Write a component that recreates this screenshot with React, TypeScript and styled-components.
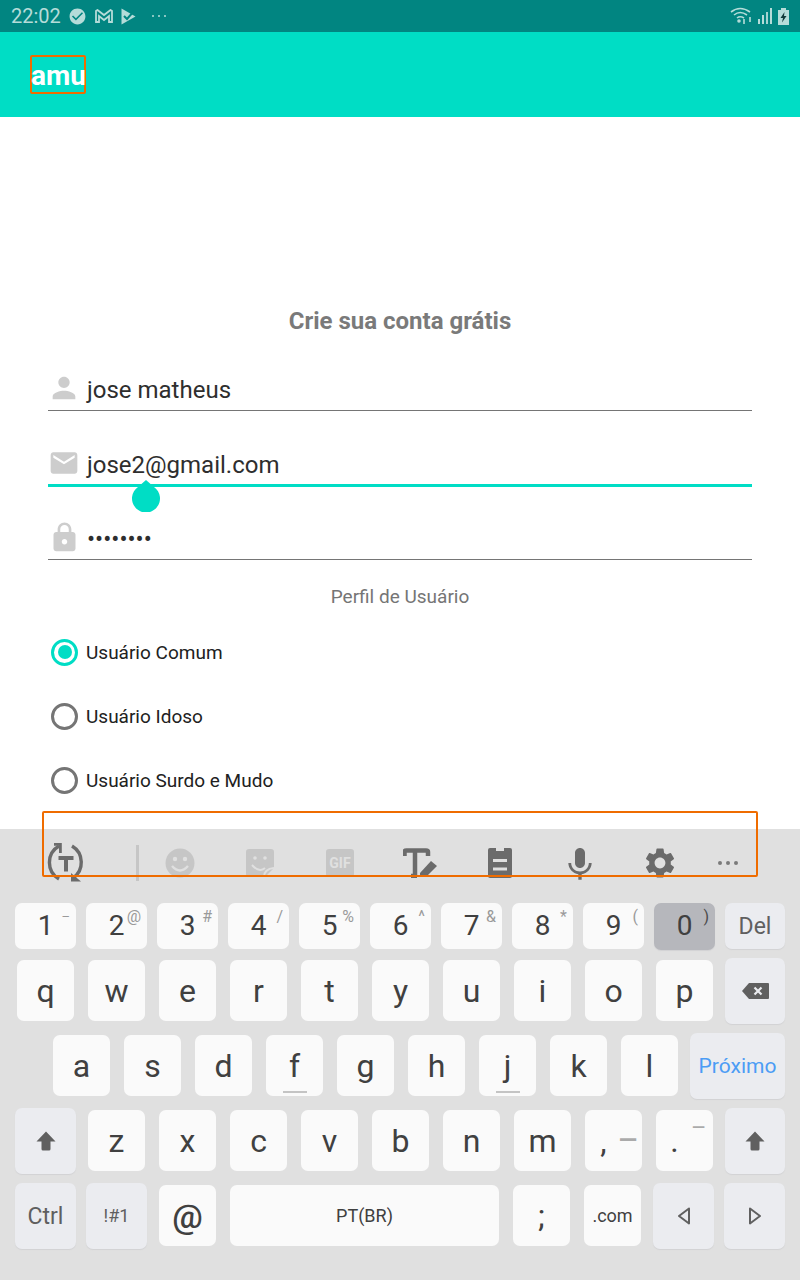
import React from "react";
import styled, { createGlobalStyle } from "styled-components";
import { MdCheckCircle, MdEmail, MdKeyboardVoice, MdLock, MdPerson, MdSettings } from "react-icons/md";

const GlobalStyle = createGlobalStyle`
  html, body {
    margin: 0;
    padding: 0;
    background: #fff;
    font-family: Roboto, "Liberation Sans", sans-serif;
  }
`;

const Screen = styled.div`
  position: relative;
  display: flex;
  flex-direction: column;
  width: 800px;
  height: 1280px;
  overflow: hidden;
`;

const StatusBar = styled.div`
  display: flex;
  align-items: center;
  height: 32px;
  padding: 0 11px;
  box-sizing: border-box;
  background: #018581;
  color: #b5dcd9;
`;

const Time = styled.span`
  font-size: 20px;
  margin-right: 7px;
`;

const StatusIcons = styled.div`
  display: flex;
  align-items: center;
  gap: 8px;
  color: #b5dcd9;
`;

const StatusMore = styled(StatusIcons)`
  margin-left: 15px;
`;

const StatusRight = styled(StatusIcons)`
  margin-left: auto;
  gap: 6px;
`;

const AppBar = styled.header`
  display: flex;
  align-items: center;
  height: 85px;
  padding-left: 30px;
  background: #00ddc5;
`;

const AppTitle = styled.div`
  box-sizing: border-box;
  width: 56px;
  height: 39px;
  border: 2px solid #ef6c00;
  border-radius: 2px;
  color: #fff;
  font-size: 28px;
  font-weight: 700;
  line-height: 38px;
  text-indent: -1px;
  white-space: nowrap;
`;

const Form = styled.main`
  position: relative;
  flex: 1;
  padding: 0 48px;
  background: #fff;
`;

const Heading = styled.h1`
  margin: 190px 0 0;
  color: #7a7a7a;
  font-size: 24px;
  font-weight: 700;
  line-height: 28px;
  text-align: center;
`;

const Field = styled.div<{ $focused?: boolean; $gap: number }>`
  display: flex;
  align-items: center;
  box-sizing: border-box;
  height: 46px;
  margin-top: ${({ $gap }) => $gap}px;
  padding: 4px 0 0 3px;
  border-bottom: ${({ $focused }) => ($focused ? "3px solid #00ddc5" : "1px solid #757575")};
`;

const FieldIcon = styled.span`
  display: flex;
  justify-content: center;
  width: 26px;
  margin: 0 10px 3px 0;
  color: #cdcdcd;

  svg {
    flex: none;
  }
`;

const FieldValue = styled.span`
  color: #2e2e2e;
  font-size: 24px;
  line-height: 30px;
  white-space: nowrap;
`;

const Handle = styled.svg`
  position: absolute;
  left: 132px;
  top: 363px;
`;

const Section = styled.div`
  margin-top: 25px;
  color: #757575;
  font-size: 19px;
  line-height: 24px;
  text-align: center;
`;

const RadioList = styled.div`
  margin-top: 11px;
`;

const RadioRow = styled.div`
  display: flex;
  align-items: center;
  height: 64px;
  padding-left: 3px;
  color: #212121;
  font-size: 19px;
`;

const RadioCircle = styled.span<{ $on?: boolean }>`
  display: flex;
  align-items: center;
  justify-content: center;
  box-sizing: border-box;
  width: 27px;
  height: 27px;
  margin-right: 8px;
  border: 3px solid ${({ $on }) => ($on ? "#00ddc5" : "#757575")};
  border-radius: 50%;

  &::after {
    content: "";
    display: ${({ $on }) => ($on ? "block" : "none")};
    width: 14px;
    height: 14px;
    border-radius: 50%;
    background: #00ddc5;
  }
`;

const Keyboard = styled.section`
  height: 451px;
  background: #e0e0e0;
`;

const Toolbar = styled.div`
  display: flex;
  align-items: flex-start;
  box-sizing: border-box;
  height: 74px;
  padding-left: 26px;
`;

const ToolSlot = styled.div<{ $w?: number; $off?: boolean }>`
  display: flex;
  align-items: center;
  justify-content: center;
  flex: none;
  width: ${({ $w }) => $w ?? 80}px;
  height: 68px;
  color: ${({ $off }) => ($off ? "#c6c6c6" : "#6b6b6b")};
`;

const ToolDivider = styled.div`
  flex: none;
  width: 3px;
  height: 36px;
  margin: 16px 1px 0 30px;
  background: #c6c6c6;
`;

const GifBadge = styled.span`
  display: flex;
  align-items: center;
  justify-content: center;
  width: 28px;
  height: 28px;
  border-radius: 3px;
  background: #c6c6c6;
  color: #e0e0e0;
  font-size: 14px;
  font-weight: 700;
`;

const KeyRows = styled.div`
  display: flex;
  flex-direction: column;
  gap: 9px;
`;

const Row = styled.div<{ $pad?: number; $h?: number }>`
  display: flex;
  height: ${({ $h }) => $h ?? 66}px;
  padding-left: ${({ $pad }) => $pad ?? 10}px;
`;

const Cell = styled.div<{ $w?: number }>`
  display: flex;
  align-items: center;
  justify-content: center;
  flex: none;
  width: ${({ $w }) => $w ?? 71}px;
`;

const Key = styled.div<{
  $w?: number;
  $h?: number;
  $tone?: "plain" | "fn" | "down";
  $size?: number;
  $weight?: number;
  $shift?: number;
  $color?: string;
  $bump?: boolean;
}>`
  position: relative;
  display: flex;
  align-items: center;
  justify-content: center;
  box-sizing: border-box;
  flex: none;
  width: ${({ $w }) => $w ?? 57}px;
  height: ${({ $h }) => $h ?? 61}px;
  margin-bottom: ${({ $h }) => ($h ? 0 : 1)}px;
  padding-right: ${({ $shift }) => $shift ?? 0}px;
  border-radius: 7px;
  background: ${({ $tone }) => ($tone === "fn" ? "#ebecf0" : $tone === "down" ? "#b6b7bc" : "#fafafa")};
  box-shadow: ${({ $tone }) => ($tone === "plain" || !$tone ? "none" : "0 1px 1px #d2d2d4")};
  color: ${({ $color }) => $color ?? "#404040"};
  font-size: ${({ $size }) => $size ?? 32}px;
  font-weight: ${({ $weight }) => $weight ?? 400};
  line-height: 1;

  &::after {
    content: "";
    display: ${({ $bump }) => ($bump ? "block" : "none")};
    position: absolute;
    left: 17px;
    bottom: 3px;
    width: 24px;
    height: 2px;
    background: #c4c4c4;
  }
`;

const Hint = styled.span<{ $top?: number; $right?: number; $size?: number; $color?: string; $weight?: number }>`
  position: absolute;
  top: ${({ $top }) => $top ?? 5}px;
  right: ${({ $right }) => $right ?? 6}px;
  color: ${({ $color }) => $color ?? "#9a9a9a"};
  font-size: ${({ $size }) => $size ?? 16}px;
  font-weight: ${({ $weight }) => $weight ?? 400};
  line-height: 18px;
`;

const Marker = styled.div`
  position: absolute;
  left: 42px;
  top: 811px;
  box-sizing: border-box;
  width: 716px;
  height: 66px;
  border: 2px solid #ef6c00;
  border-radius: 2px;
`;

const numberKeys = [
  ["1", "–"],
  ["2", "@"],
  ["3", "#"],
  ["4", "/"],
  ["5", "%"],
  ["6", "^"],
  ["7", "&"],
  ["8", "*"],
  ["9", "("],
];

const ShiftIcon = () => (
  <svg width="20" height="20" viewBox="0 0 20 20" fill="#606060">
    <path d="M10 0.5 L19.5 10.5 L14.5 10.5 L14.5 18 Q14.5 19.5 13 19.5 L7 19.5 Q5.5 19.5 5.5 18 L5.5 10.5 L0.5 10.5 Z" />
  </svg>
);

const BackspaceIcon = () => (
  <svg width="27" height="16" viewBox="0 0 27 16">
    <path d="M7 0 H26 Q27 0 27 1 V15 Q27 16 26 16 H7 L0 8 Z" fill="#606060" />
    <path d="M12.5 4.5 L19.5 11.5 M19.5 4.5 L12.5 11.5" stroke="#ebecf0" strokeWidth="2.2" />
  </svg>
);

const ArrowIcon = ({ flip }: { flip?: boolean }) => (
  <svg width="12" height="18" viewBox="0 0 12 18">
    <path
      d={flip ? "M1 1.5 L11 9 L1 16.5 Z" : "M11 1.5 L1 9 L11 16.5 Z"}
      fill="none"
      stroke="#606060"
      strokeWidth="2"
      strokeLinejoin="round"
    />
  </svg>
);

const RotateTextIcon = () => (
  <svg width="40" height="40" viewBox="0 0 40 40" fill="none" stroke="#6b6b6b" strokeWidth="3.4">
    <path d="M13 3 A19 19 0 0 0 13 36" />
    <path d="M26 3 A19 19 0 0 1 27 35" />
    <path d="M8 1.4 H14.4 V10" strokeWidth="2.8" />
    <path d="M25 30 V38.5 H35 Z" fill="#6b6b6b" stroke="none" />
    <path d="M12.5 13 H27.5 V17 H22 V28.5 H18 V17 H12.5 Z" fill="#6b6b6b" stroke="none" />
  </svg>
);

const SmileIcon = () => (
  <svg width="30" height="30" viewBox="0 0 30 30">
    <circle cx="15" cy="15" r="14.5" fill="#c6c6c6" />
    <circle cx="10" cy="11" r="2.2" fill="#e0e0e0" />
    <circle cx="20" cy="11" r="2.2" fill="#e0e0e0" />
    <path d="M7 18 Q15 27 23 18" fill="none" stroke="#e0e0e0" strokeWidth="2.4" />
  </svg>
);

const StickerIcon = () => (
  <svg width="28" height="28" viewBox="0 0 28 28">
    <path d="M3 0 H25 Q28 0 28 3 V19 L19 28 H3 Q0 28 0 25 V3 Q0 0 3 0 Z" fill="#c6c6c6" />
    <circle cx="9" cy="9" r="1.8" fill="#e0e0e0" />
    <circle cx="19" cy="9" r="1.8" fill="#e0e0e0" />
    <path d="M6 16 Q13 24 19 19" fill="none" stroke="#e0e0e0" strokeWidth="2" />
    <path d="M18 28 Q18 20 28 19" fill="none" stroke="#e0e0e0" strokeWidth="2" />
  </svg>
);

const TextEditIcon = () => (
  <svg width="34" height="30" viewBox="0 0 34 30">
    <path
      d="M1.5 8 V4 Q1.5 2.5 3.5 2.5 H23 Q25 2.5 25 4 V8 M12 2.5 V28 M8 28 H14"
      fill="none"
      stroke="#6b6b6b"
      strokeWidth="4.5"
    />
    <path d="M17 25 L28 13 L34 18 L23 29 L17 29 Z" fill="#6b6b6b" />
  </svg>
);

const ClipboardIcon = () => (
  <svg width="24" height="30" viewBox="0 0 24 30">
    <path d="M2 0 H8 V3 H16 V0 H22 Q24 0 24 2 V28 Q24 30 22 30 H2 Q0 30 0 28 V2 Q0 0 2 0 Z" fill="#6b6b6b" />
    <rect x="5" y="11" width="14" height="3" fill="#e0e0e0" />
    <rect x="5" y="19.5" width="14" height="3" fill="#e0e0e0" />
  </svg>
);

const MailMark = () => (
  <svg width="18" height="14" viewBox="0 0 18 14" fill="none" stroke="currentColor" strokeWidth="1.8">
    <path d="M1 13 V2 L2.5 1 L9 6 L15.5 1 L17 2 V13 H14 V7 L9 11 L4 7 V13 Z" />
  </svg>
);

const PlayCheck = () => (
  <svg width="15" height="17" viewBox="0 0 15 17">
    <path d="M0.5 0.5 L14.5 8.5 L0.5 16.5 Z" fill="currentColor" />
    <path d="M3 8 L6 11 L13 3" fill="none" stroke="#018581" strokeWidth="2" />
  </svg>
);

const MoreDots = () => (
  <svg width="16" height="4" viewBox="0 0 16 4" fill="currentColor">
    <circle cx="2" cy="2" r="1" />
    <circle cx="8" cy="2" r="1" />
    <circle cx="14" cy="2" r="1" />
  </svg>
);

const Wifi = () => (
  <svg width="22" height="18" viewBox="0 0 22 18" fill="none" stroke="currentColor" strokeWidth="1.6">
    <path d="M1 5 Q10 -2 20 5 M4 8 Q10 3 17 8 M7 11 Q10 8.5 14 11" />
    <circle cx="9" cy="14" r="1" fill="currentColor" />
    <path d="M14 12 V17 M20 10 V15" />
  </svg>
);

const Signal = () => (
  <svg width="14" height="16" viewBox="0 0 14 16" fill="currentColor">
    <rect x="0" y="11" width="2" height="5" />
    <rect x="4" y="7" width="2" height="9" />
    <rect x="8" y="4" width="2" height="12" opacity="0.9" />
    <rect x="12" y="0" width="2" height="16" />
  </svg>
);

const Battery = () => (
  <svg width="11" height="17" viewBox="0 0 11 17">
    <path d="M3 0 H8 V2 H11 V17 H0 V2 H3 Z" fill="currentColor" />
    <path d="M6.5 4 L2.5 10 H5 L4 14.5 L8.5 8 H6 Z" fill="#103a3a" />
  </svg>
);

const App: React.FC = () => (
  <Screen>
    <GlobalStyle />
    <StatusBar>
      <Time>22:02</Time>
      <StatusIcons>
        <MdCheckCircle size={19} />
        <MailMark />
        <PlayCheck />
      </StatusIcons>
      <StatusMore>
        <MoreDots />
      </StatusMore>
      <StatusRight>
        <Wifi />
        <Signal />
        <Battery />
      </StatusRight>
    </StatusBar>
    <AppBar>
      <AppTitle>amu</AppTitle>
    </AppBar>
    <Form>
      <Heading>Crie sua conta grátis</Heading>
      <Field $gap={30}>
        <FieldIcon>
          <MdPerson size={34} />
        </FieldIcon>
        <FieldValue>jose matheus</FieldValue>
      </Field>
      <Field $gap={30} $focused>
        <FieldIcon>
          <MdEmail size={32} />
        </FieldIcon>
        <FieldValue>jose2@gmail.com</FieldValue>
      </Field>
      <Field $gap={27}>
        <FieldIcon>
          <MdLock size={33} />
        </FieldIcon>
        <FieldValue>••••••••</FieldValue>
      </Field>
      <Handle width="28" height="32" viewBox="0 0 28 32">
        <path d="M14 0 L22 7 A14 14 0 1 1 6 7 Z" fill="#00ddc5" />
      </Handle>
      <Section>Perfil de Usuário</Section>
      <RadioList>
        <RadioRow>
          <RadioCircle $on />
          Usuário Comum
        </RadioRow>
        <RadioRow>
          <RadioCircle />
          Usuário Idoso
        </RadioRow>
        <RadioRow>
          <RadioCircle />
          Usuário Surdo e Mudo
        </RadioRow>
      </RadioList>
    </Form>
    <Keyboard>
      <Toolbar>
        <ToolSlot>
          <RotateTextIcon />
        </ToolSlot>
        <ToolDivider />
        <ToolSlot $off>
          <SmileIcon />
        </ToolSlot>
        <ToolSlot $off>
          <StickerIcon />
        </ToolSlot>
        <ToolSlot $off>
          <GifBadge>GIF</GifBadge>
        </ToolSlot>
        <ToolSlot>
          <TextEditIcon />
        </ToolSlot>
        <ToolSlot>
          <ClipboardIcon />
        </ToolSlot>
        <ToolSlot>
          <MdKeyboardVoice size={40} />
        </ToolSlot>
        <ToolSlot>
          <MdSettings size={36} />
        </ToolSlot>
        <ToolSlot $w={56}>
          <svg width="20" height="4" viewBox="0 0 20 4" fill="#7a7a7a">
            <circle cx="2" cy="2" r="2" />
            <circle cx="10" cy="2" r="2" />
            <circle cx="18" cy="2" r="2" />
          </svg>
        </ToolSlot>
      </Toolbar>
      <KeyRows>
        <Row $h={46}>
          {numberKeys.map(([digit, symbol]) => (
            <Cell key={digit}>
              <Key $w={61} $h={46} $size={28}>
                {digit}
                <Hint $size={digit === "1" ? 13 : 16}>{symbol}</Hint>
              </Key>
            </Cell>
          ))}
          <Cell>
            <Key $w={61} $h={47} $tone="down" $size={28}>
              0
              <Hint $top={5} $color="#4a4a4a">
                )
              </Hint>
            </Key>
          </Cell>
          <Cell $w={70}>
            <Key $w={60} $h={46} $tone="fn" $size={23} $color="#5f5f5f">
              Del
            </Key>
          </Cell>
        </Row>
        <Row>
          {"qwertyuiop".split("").map((letter) => (
            <Cell key={letter}>
              <Key>{letter}</Key>
            </Cell>
          ))}
          <Cell $w={70}>
            <Key $w={60} $h={66} $tone="fn">
              <BackspaceIcon />
            </Key>
          </Cell>
        </Row>
        <Row $pad={46}>
          {"asdfghjkl".split("").map((letter) => (
            <Cell key={letter}>
              <Key $bump={letter === "f" || letter === "j"}>{letter}</Key>
            </Cell>
          ))}
          <Cell $w={105}>
            <Key $w={95} $h={66} $tone="fn" $size={21} $color="#4b9cf5">
              Próximo
            </Key>
          </Cell>
        </Row>
        <Row>
          <Cell>
            <Key $w={61} $h={66} $tone="fn">
              <ShiftIcon />
            </Key>
          </Cell>
          {"zxcvbnm".split("").map((letter) => (
            <Cell key={letter}>
              <Key>{letter}</Key>
            </Cell>
          ))}
          <Cell>
            <Key $shift={20}>
              ,
              <Hint $top={21} $right={5} $size={24} $color="#aaaaaa" $weight={700}>
                —
              </Hint>
            </Key>
          </Cell>
          <Cell>
            <Key $shift={20}>
              .
              <Hint $top={8} $right={8} $size={17} $color="#aaaaaa" $weight={700}>
                —
              </Hint>
            </Key>
          </Cell>
          <Cell $w={70}>
            <Key $w={60} $h={66} $tone="fn">
              <ShiftIcon />
            </Key>
          </Cell>
        </Row>
        <Row>
          <Cell>
            <Key $w={61} $h={66} $tone="fn" $size={23} $color="#5f5f5f">
              Ctrl
            </Key>
          </Cell>
          <Cell>
            <Key $w={61} $h={66} $tone="fn" $size={18} $color="#5f5f5f">
              !#1
            </Key>
          </Cell>
          <Cell>
            <Key $size={34} $weight={500}>
              @
            </Key>
          </Cell>
          <Cell $w={283}>
            <Key $w={269} $size={18}>
              PT(BR)
            </Key>
          </Cell>
          <Cell>
            <Key>;</Key>
          </Cell>
          <Cell>
            <Key $size={18}>.com</Key>
          </Cell>
          <Cell>
            <Key $w={61} $h={66} $tone="fn">
              <ArrowIcon />
            </Key>
          </Cell>
          <Cell>
            <Key $w={61} $h={66} $tone="fn">
              <ArrowIcon flip />
            </Key>
          </Cell>
        </Row>
      </KeyRows>
    </Keyboard>
    <Marker />
  </Screen>
);

export default App;
